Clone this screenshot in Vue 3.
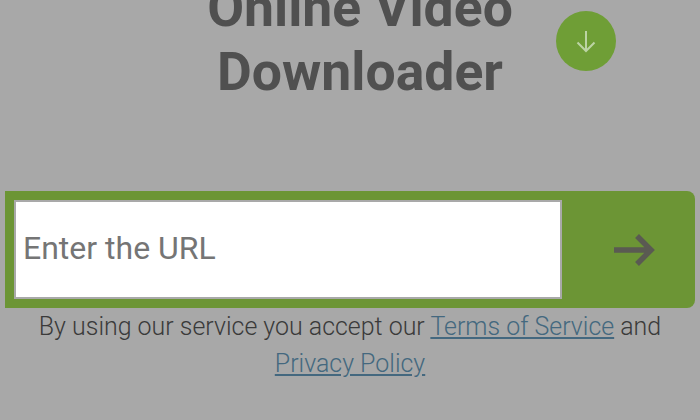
<script setup>
</script>

<template>
  <main class="page">
    <header class="hero">
      <h1 class="title">Online Video<br />Downloader</h1>
      <span class="badge">
        <svg viewBox="0 0 24 24" width="24" height="24" fill="none" stroke="#bcd4a4" stroke-width="2">
          <path d="M12 2V22M3.5 13.5L12 22l8.5-8.5" />
        </svg>
      </span>
    </header>
    <form class="search" @submit.prevent>
      <input class="field" type="text" placeholder="Enter the URL" />
      <button class="go" type="submit" aria-label="Go">
        <svg viewBox="0 0 42 34" width="42" height="34" fill="none" stroke="#5a5a52" stroke-width="5.5">
          <path d="M1 17H37M24 3l14 14-14 14" />
        </svg>
      </button>
    </form>
    <p class="legal">
      By using our service you accept our <a href="#">Terms of Service</a> and<br />
      <a href="#">Privacy Policy</a>
    </p>
  </main>
</template>

<style>
html, body { margin: 0; background: #a8a8a8; }
</style>

<style scoped>
.page {
  width: 700px;
  height: 420px;
  overflow: hidden;
  background: #a8a8a8;
  font-family: Roboto, sans-serif;
}
.hero {
  height: 191px;
  display: flex;
  justify-content: center;
  position: relative;
}
.title {
  margin: -24px 0 0 20px;
  font-size: 53.5px;
  line-height: 64px;
  font-weight: 700;
  color: #505050;
  text-align: center;
}
.badge {
  position: absolute;
  left: 556px;
  top: 10.5px;
  width: 60px;
  height: 60px;
  border-radius: 50%;
  background: #6f9e36;
  display: flex;
  align-items: center;
  justify-content: center;
}
.search {
  margin: 0 5px;
  height: 117px;
  box-sizing: border-box;
  background: #6c9535;
  border-radius: 0 8px 8px 0;
  display: flex;
  padding: 9px 0;
}
.field {
  margin-left: 9px;
  width: 548px;
  box-sizing: border-box;
  height: 99px;
  border: 2px solid #a9a9a9;
  background: #fff;
  padding: 0 7px 3px;
  font-family: Roboto, sans-serif;
  font-size: 32px;
  font-weight: 400;
  color: #757575;
  outline: none;
  border-radius: 0;
}
.field::placeholder { color: #757575; opacity: 1; }
.go {
  flex: 1;
  border: 0;
  background: none;
  padding: 0 0 0 11px;
  display: flex;
  align-items: center;
  justify-content: center;
}
.legal {
  margin: 0;
  font-size: 24.95px;
  line-height: 37px;
  font-weight: 300;
  color: #3a3a3a;
  text-align: center;
}
.legal a { color: #44687f; text-decoration: underline; }
</style>
